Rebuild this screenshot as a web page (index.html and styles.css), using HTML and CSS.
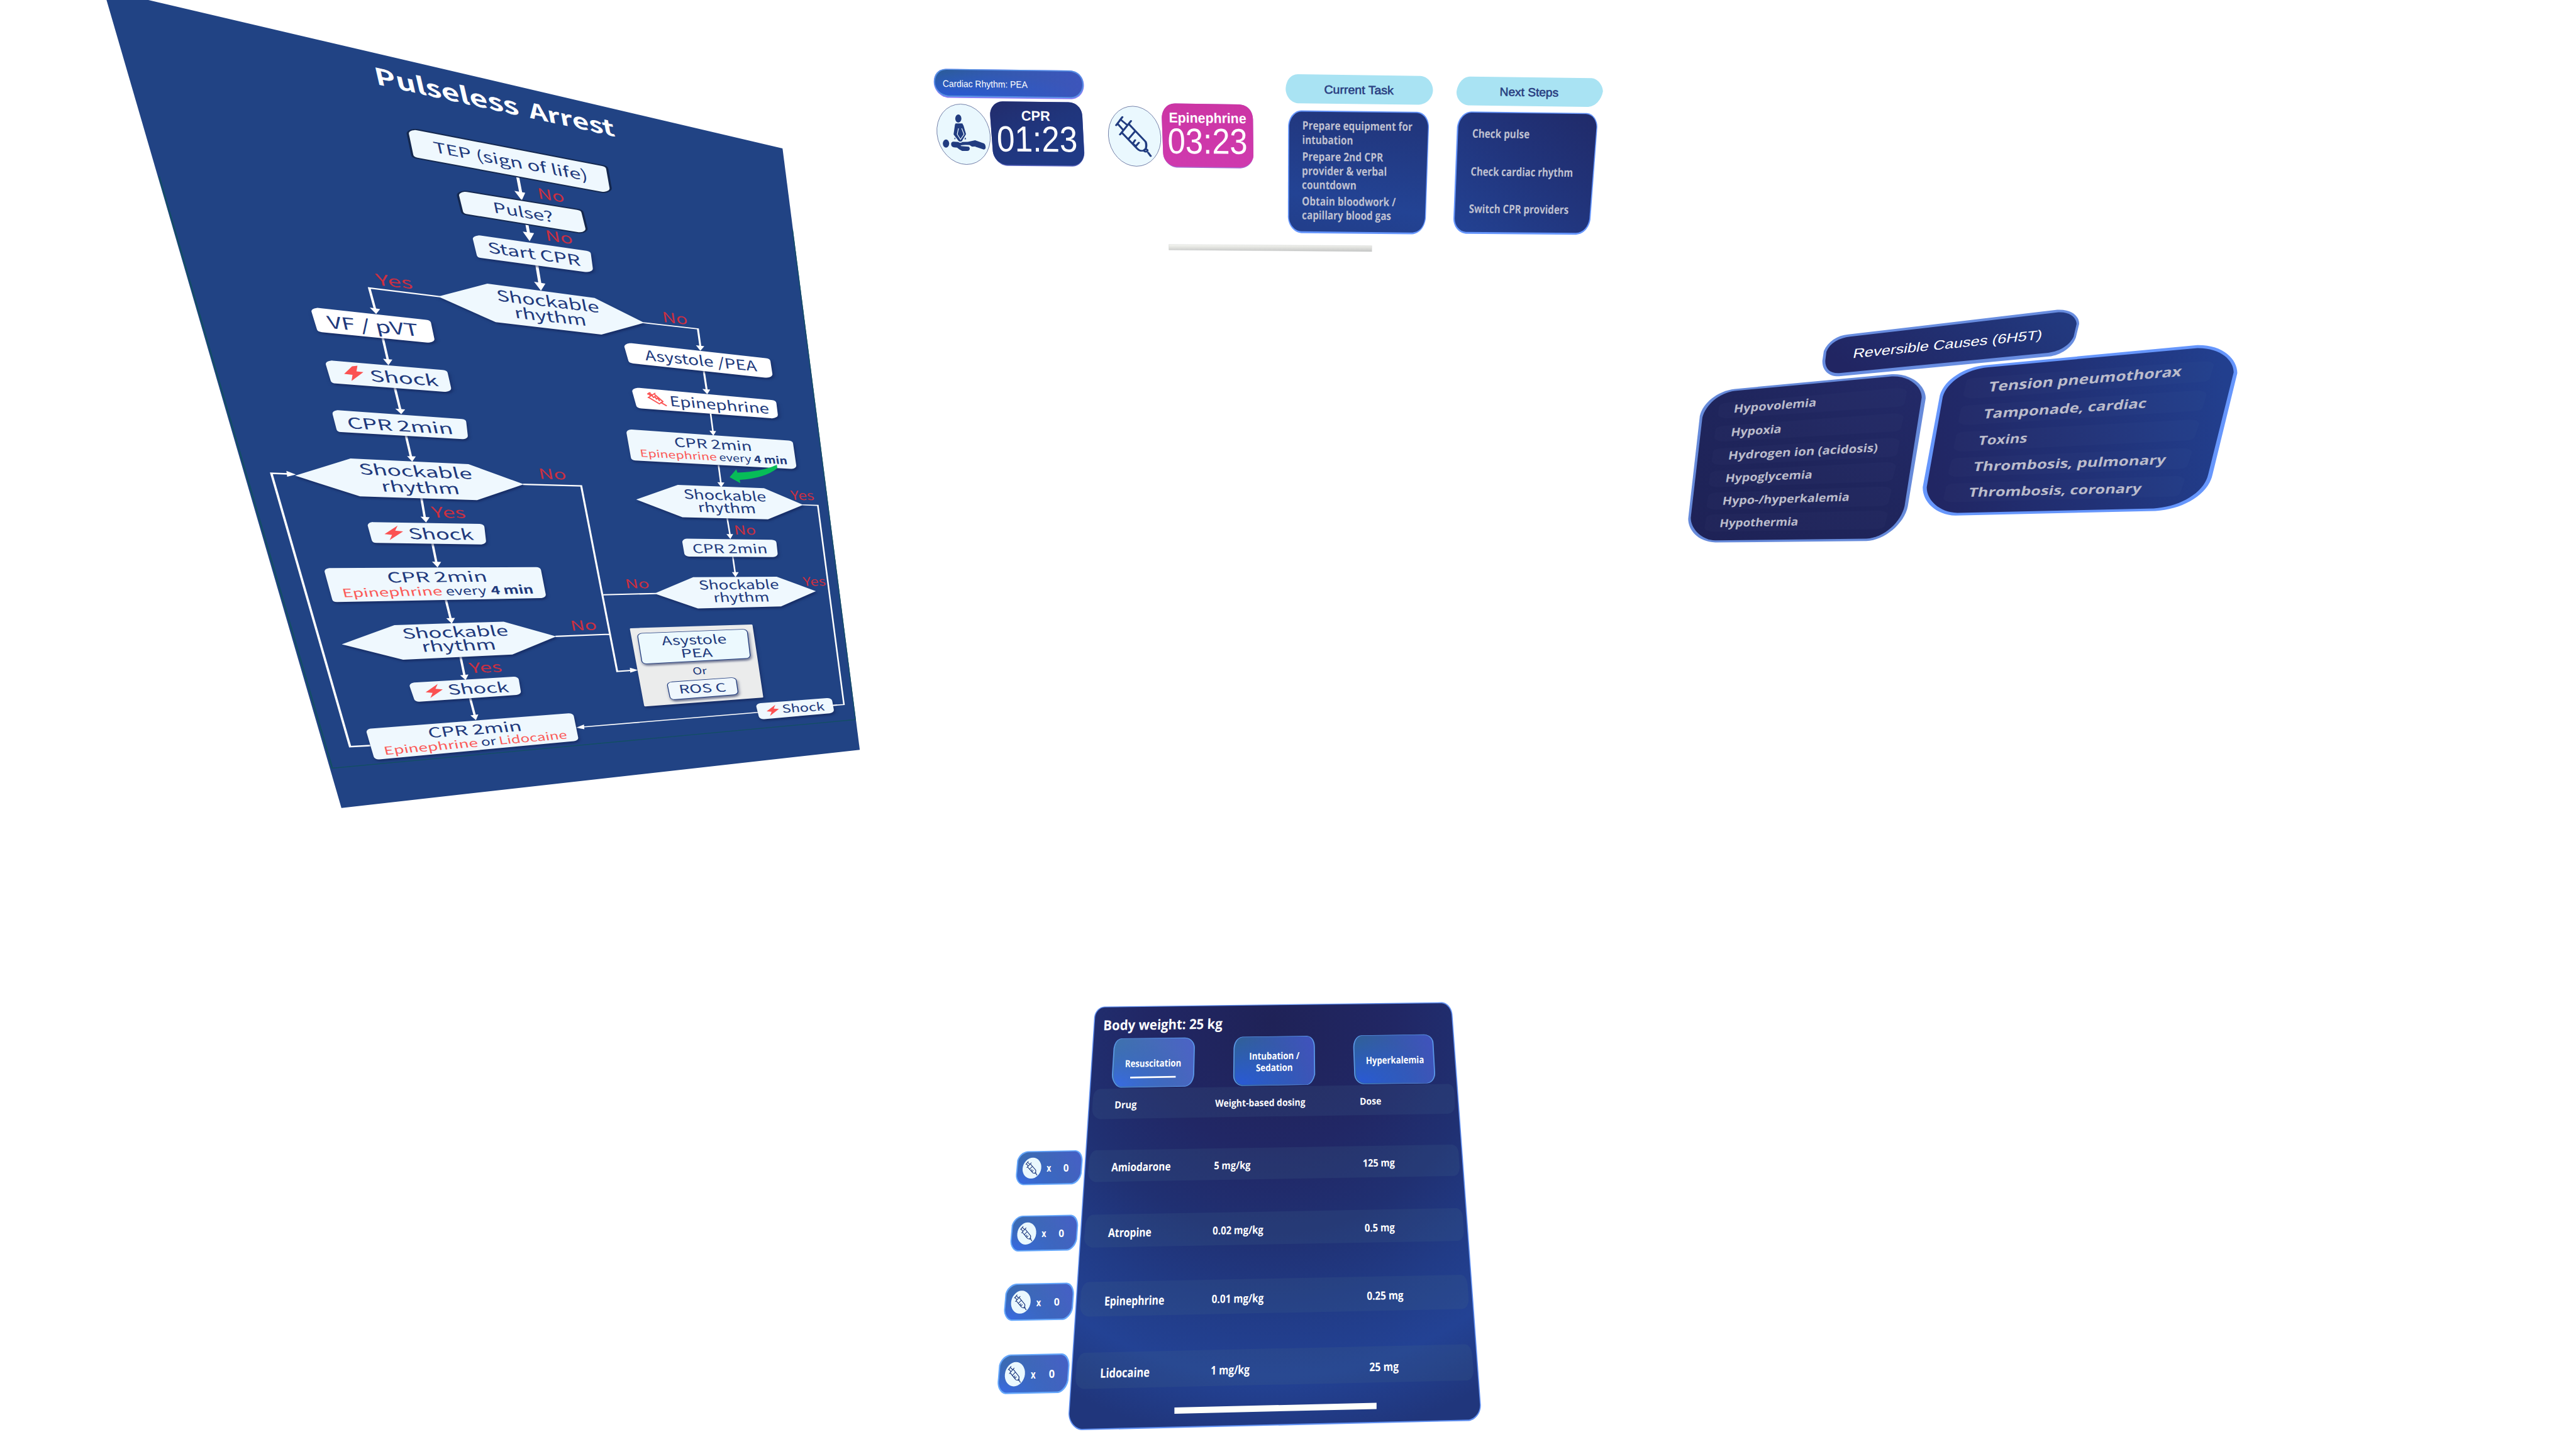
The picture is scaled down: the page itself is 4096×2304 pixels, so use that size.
FILE: index.html
```
<!DOCTYPE html>
<html lang="en">
<head>
<meta charset="utf-8">
<title>Resuscitation assistant</title>
<link rel="stylesheet" href="styles.css">
</head>
<body>
<svg class="defs" aria-hidden="true">
  <defs>
    <linearGradient id="g-rhythm" x1="0" y1="0" x2="1" y2="0"><stop offset="0" stop-color="#2b5c9a"/><stop offset=".35" stop-color="#325aae"/><stop offset="1" stop-color="#3d55bb"/></linearGradient>
    <radialGradient id="g-glow" cx="0.05" cy="1" r=".95"><stop offset="0" stop-color="#2a59d6"/><stop offset="1" stop-color="#2a59d6" stop-opacity="0"/></radialGradient>
    <linearGradient id="g-timer" x1="0" y1="0" x2=".6" y2="1"><stop offset="0" stop-color="#222c6c"/><stop offset=".5" stop-color="#20357c"/><stop offset="1" stop-color="#203a86"/></linearGradient>
    <linearGradient id="g-epi" x1="0" y1="0" x2="0" y2="1"><stop offset="0" stop-color="#cc35a4"/><stop offset="1" stop-color="#cf3aae"/></linearGradient>
    <linearGradient id="g-bar" x1="0" y1="0" x2="0" y2="1"><stop offset="0" stop-color="#f6f7f2"/><stop offset="1" stop-color="#c4c5c4"/></linearGradient>
    <linearGradient id="g-task" x1=".6" y1="0" x2=".4" y2="1"><stop offset="0" stop-color="#21357b"/><stop offset=".75" stop-color="#234394"/><stop offset="1" stop-color="#223f8c"/></linearGradient>
    <linearGradient id="g-next" x1="1" y1="0" x2="0" y2="1"><stop offset="0" stop-color="#202a69"/><stop offset=".5" stop-color="#21357d"/><stop offset="1" stop-color="#234293"/></linearGradient>
    <linearGradient id="g-cause" x1="0" y1=".6" x2="1" y2=".3"><stop offset="0" stop-color="#212562"/><stop offset="1" stop-color="#22397f"/></linearGradient>
    <linearGradient id="g-h" x1="0" y1="1" x2="1" y2="0"><stop offset="0" stop-color="#1e2256"/><stop offset=".5" stop-color="#1f255c"/><stop offset="1" stop-color="#232a69"/></linearGradient>
    <linearGradient id="g-t" x1="0" y1=".6" x2="1" y2=".5"><stop offset="0" stop-color="#212663"/><stop offset=".5" stop-color="#213176"/><stop offset="1" stop-color="#223f8e"/></linearGradient>
    <radialGradient id="g-dose" gradientUnits="userSpaceOnUse" cx="0" cy="0" r="2900" gradientTransform="translate(880 200) scale(.45 1)"><stop offset="0" stop-color="#1f2257"/><stop offset=".3" stop-color="#212765"/><stop offset=".5" stop-color="#203072"/><stop offset=".68" stop-color="#213b86"/><stop offset=".84" stop-color="#234294"/><stop offset="1" stop-color="#20367c"/></radialGradient>
    <linearGradient id="g-btn" x1="0" y1=".2" x2="1" y2="0"><stop offset="0" stop-color="#2f6196"/><stop offset=".5" stop-color="#3659ac"/><stop offset="1" stop-color="#4152be"/></linearGradient>
    <linearGradient id="g-btn-on" x1="0" y1=".2" x2="1" y2="0"><stop offset="0" stop-color="#3f76aa"/><stop offset="1" stop-color="#4e62c8"/></linearGradient>
    <linearGradient id="g-chip" x1="0" y1=".2" x2="1" y2="0"><stop offset="0" stop-color="#3a6fae"/><stop offset="1" stop-color="#475fc8"/></linearGradient>
    <radialGradient id="g-glow2" cx="0" cy="1" r="1.05"><stop offset="0" stop-color="#386ae6"/><stop offset="1" stop-color="#3862b4" stop-opacity="0.1"/></radialGradient>
    <clipPath id="board-clip"><polygon points="12,0 97,0 1386,555 1543,2804 489.4,3021.5"/></clipPath>
    <polygon id="bolt" points="34,0 1,32 20,35 14,55 48,22 28,19"/>
    <g id="syringe">
      <path d="M1233 147L1193 220M1222 170L1262 215M1203 208L1240 265M1289 182L1218 303M1275 210L1384 368Q1392 395 1385 430Q1378 450 1360 449Q1345 450 1330 430L1232 290M1315 275L1275 340M1316 353L1300 385M1340 376L1320 408L1304 388M1400 464L1417 496"/>
      <circle cx="1385" cy="446" r="11"/>
    </g>
    <g id="chip">
      <path class="chip-edge" d="M38 6L188 0C203 4 209 39 209 69L206 159C203 199 188 231 176 234L23 240C8 237 0 199 1 169L5 69C10 34 23 9 38 6Z"/>
      <path fill="url(#g-chip)" d="M40 14L186 8C199 12 205 42 205 72L202 157C199 192 186 222 174 225L24 231C12 228 4 197 5 167L9 72C13 42 26 17 40 14Z"/>
      <path fill="url(#g-glow2)" d="M40 14L186 8C199 12 205 42 205 72L202 157C199 192 186 222 174 225L24 231C12 228 4 197 5 167L9 72C13 42 26 17 40 14Z"/>
      <circle class="disc" r="100" transform="matrix(.29 0 -.035 .72 51 123)"/>
      <use href="#syringe" class="ink" transform="matrix(.1706 0 -.013 .268 -168.7 37.6)"/>
    </g>
  </defs>
</svg>
<main class="scene">

<section class="panel algorithm" aria-label="Pulseless arrest algorithm">
<svg class="art" viewBox="0 0 1568 1568" preserveAspectRatio="none">
  <polygon class="board" points="12,0 97,0 1386,555 1543,2804 489.4,3021.5"/>
  <g clip-path="url(#board-clip)">
    <path class="seam" d="M119 660L471 2873L1535 2691L1407 860"/>
  </g>

  <g class="wire">
    <path class="thick" d="M847 655L854 722M866 835L870 874M886 985L893 1062"/>
    <path class="mid" d="M690 1109.500L546 1077L558 1158M573 1260L584 1348M598 1450L609 1532"/>
    <path class="thin" d="M1103 1207L1214 1230L1219 1296M1226 1388L1232 1460"/>
  </g>
  <path class="head" d="M841 714L863 721L856 750ZM858 866L881 872L872 902ZM881 1054L904 1061L895 1087ZM547 1150L568 1156L560 1174ZM1210 1291L1227 1295L1219 1312ZM574 1342L593 1345L585 1366ZM599 1528L619 1531L611 1549ZM1223 1455L1239 1457L1233 1474Z"/>

  <polygon class="rim" points="639,499 1015,633 1022,705 648,578"/>
  <polygon class="rim" points="741,730 965,797 973,856 749,789"/>
  <g class="nodes">
    <polygon class="node" points="639,499 1015,633 1022,705 648,578"/>
    <polygon class="node" points="741,730 965,797 973,856 749,789"/>
  </g>
  <g class="nodes raised">
    <polygon class="node" points="769,893 984,950 988,1005 777,953"/>
    <polygon class="hex" points="686,1109 786,1061 1004,1114 1105,1207 1018,1251 803,1205"/>
    <polygon class="node plain" points="441,1164 659,1208 666,1269 452,1230"/>
    <polygon class="node" points="470,1361 693,1396 700,1453 480,1422"/>
    <polygon class="node plain" points="1077,1296 1349,1352 1353,1400 1085,1347"/>
    <polygon class="node plain" points="1093,1463 1361,1508 1364,1552 1101,1515"/>
  </g>
  <polygon class="bolt" points="522,1368 511,1370 495,1398 512,1402 510,1425 534,1392 520,1389"/>
  <g class="red-syringe" transform="matrix(.2696 0 0 .4181 1050 1404.900)">
    <path d="M230 164L247 153M232 160L250 178M240 154L258 170M234 196L284 158M240 196L318 252L345 232L284 170M330 240L370 268M262 178L275 196L284 186L296 210L306 200L318 224"/>
  </g>

  <g class="flow">
    <text class="title" font-size="88" textLength="292" transform="matrix(1 .405 .125 1 561 315)">Pulseless</text>
    <text class="title" font-size="81" textLength="174" transform="matrix(1 .405 .1 1 873 441)">Arrest</text>
    <text font-size="55" textLength="313" transform="matrix(1 .343 .12 1 679 570)">TEP (sign of life)</text>
    <text font-size="54" textLength="122" transform="matrix(1 .305 .11 1 800 795)">Pulse?</text>
    <text font-size="55" textLength="188" transform="matrix(1 .265 .108 1 789 945)">Start CPR</text>
    <text font-size="56" textLength="208" transform="matrix(1 .215 .105 1 807 1125)">Shockable</text>
    <text font-size="56" textLength="146" transform="matrix(1 .205 .103 1 843 1189)">rhythm</text>
    <text font-size="63" textLength="185" transform="matrix(1 .168 .127 1 464 1227)">VF / pVT</text>
    <text font-size="57" textLength="138" transform="matrix(1 .135 .125 1 550 1426)">Shock</text>
    <text font-size="52" textLength="227" transform="matrix(1 .185 .083 1 1108 1347)">Asystole /PEA</text>
    <text font-size="51" textLength="202" transform="matrix(1 .148 .083 1 1158 1518)">Epinephrine</text>
    <g class="answer">
      <text font-size="54" textLength="54" transform="matrix(1 .29 .1 1 890 742)">No</text>
      <text font-size="53" textLength="55" transform="matrix(1 .26 .1 1 906 899)">No</text>
      <text font-size="58" textLength="74" transform="matrix(1 .2 .12 1 562 1066)">Yes</text>
      <text font-size="52" textLength="51" transform="matrix(1 .19 .08 1 1143 1204)">No</text>
    </g>
  </g>

  <g transform="matrix(.8043 0 0 .9839 306.800 1505.300)">
    <g class="wire">
      <path class="thick" d="M390 125L403 208M429 362L438 440M457 535L467 608M491 750L503 822M528 966L538 1038M552 1122L564 1190M300 1304L249 1308L50 269L92 271.500"/>
      <path class="mid" d="M686 311L833 317L924 1022L960 1018.500M889 731L1022 726M768 889L904 881"/>
      <path class="thin" d="M1160 42L1166 110M1180 238L1186 306M1202 440L1209 502M1216 585L1222 648M1392 389L1431 391L1497 1148L1462 1152M1280 1178L836 1233.500"/>
    </g>
    <path class="head" d="M393 204L415 205L406 225ZM427 434L450 436L441 456ZM456 605L479 606L470 627ZM492 820L514 819L506 840ZM527 1037L548 1034L541 1055ZM553 1189L573 1186L567 1207ZM88 260L90 282L112 274ZM956 1008L957 1027L977 1017ZM1157 107L1174 109L1167 126ZM1177 303L1195 304L1187 322ZM1200 500L1217 500L1210 519ZM1214 645L1231 645L1223 664ZM840 1224L841 1242L820 1236Z"/>
    <g class="nodes raised">
      <polygon class="node" points="217,42 530,75 534,127 227,100"/>
      <polygon class="hex" points="110,278 250,213 548,234 688,311 570,371 274,357"/>
      <polygon class="node" points="306,467 576,474 580,527 316,521"/>
      <polygon class="node" points="197,642 719,638 731,731 216,746"/>
      <polygon class="hex" points="228,919 361,846 637,833 770,889 659,958 383,978"/>
      <polygon class="node" points="412,1077 663,1055 668,1099 423,1125"/>
      <polygon class="node" points="303,1252 802,1194 813,1275 321,1344"/>
      <polygon class="node" points="960,115 1356,157 1364,240 971,208"/>
      <polygon class="hex" points="972,369 1077,313 1295,326 1394,389 1305,444 1089,436"/>
      <polygon class="node" points="1101,530 1314,534 1317,575 1106,573"/>
      <polygon class="hex" points="1018,726 1116,664 1327,662 1426,717 1338,775 1128,783"/>
      <polygon class="outcome" points="959,861 1263,847 1290,1119 995,1152"/>
      <polygon class="node" points="1288,1155 1455,1136 1459,1169 1294,1191"/>
    </g>
    <path class="thin-over" d="M1462 1152L1480 1150"/>
    <g class="raised">
      <polygon class="oval-rim" points="988,889 1241,874 1248,961 998,981"/>
      <polygon class="oval-rim" points="1063,1074 1213,1058 1217,1099 1069,1117"/>
    </g>
    <polygon class="oval" points="988,889 1241,874 1248,961 998,981"/>
    <polygon class="oval pale" points="1063,1074 1213,1058 1217,1099 1069,1117"/>
    <use href="#bolt" class="bolt" transform="translate(335 468)"/>
    <use href="#bolt" class="bolt" transform="matrix(.92 -.03 0 .95 439 1071)"/>
    <use href="#bolt" class="bolt" transform="matrix(.66 -.03 0 .75 1301 1150)"/>
    <path class="pointer" transform="matrix(.3351 0 0 .4249 923.900 -102)" d="M848 908L898 838L907 867Q1090 860 1204 797L1208 828Q1110 920 924 932L929 962Z"/>
    <g class="flow">
      <text font-size="57" textLength="267" transform="matrix(1 .085 .16 1 245 98)">CPR 2min</text>
      <text font-size="56" textLength="285" transform="matrix(1 .065 .165 1 275 273)">Shockable</text>
      <text font-size="56" textLength="197" transform="matrix(1 .055 .163 1 331 338)">rhythm</text>
      <text font-size="56" textLength="163" transform="matrix(1 .02 .165 1 400 519)">Shock</text>
      <text font-size="53" textLength="252" transform="matrix(1 -.012 .17 1 346 684)">CPR 2min</text>
      <text class="drug" font-size="43" textLength="252" transform="matrix(1 -.03 .17 1 232 740)">Epinephrine</text>
      <text font-size="43" textLength="103" transform="matrix(1 -.03 .165 1 493 733)">every</text>
      <text class="strong" font-size="43" textLength="107" transform="matrix(1 -.03 .16 1 607 729)">4 min</text>
      <text font-size="53" textLength="267" transform="matrix(1 -.045 .165 1 384 898)">Shockable</text>
      <text font-size="54" textLength="187" transform="matrix(1 -.05 .165 1 433 948)">rhythm</text>
      <text font-size="52" textLength="153" transform="matrix(1 -.07 .162 1 499 1111)">Shock</text>
      <text font-size="51" textLength="236" transform="matrix(1 -.115 .16 1 449 1275)">CPR 2min</text>
      <text class="drug" font-size="41" textLength="237" transform="matrix(1 -.13 .165 1 337 1339)">Epinephrine</text>
      <text font-size="41" textLength="38" transform="matrix(1 -.13 .16 1 582 1306)">or</text>
      <text class="drug" font-size="40" textLength="172" transform="matrix(1 -.13 .15 1 627 1300)">Lidocaine</text>
      <text font-size="48" textLength="196" transform="matrix(1 .085 .11 1 1070 168)">CPR 2min</text>
      <text class="drug" font-size="38" textLength="194" transform="matrix(1 .077 .11 1 983 206)">Epinephrine</text>
      <text font-size="38" textLength="81" transform="matrix(1 .075 .1 1 1183 222)">every</text>
      <text class="strong" font-size="38" textLength="84" transform="matrix(1 .072 .1 1 1271 229)">4 min</text>
      <text font-size="49" textLength="208" transform="matrix(1 .05 .11 1 1094 366)">Shockable</text>
      <text font-size="49" textLength="146" transform="matrix(1 .04 .11 1 1130 416)">rhythm</text>
      <text font-size="46" textLength="189" transform="matrix(1 .006 .105 1 1116 572)">CPR 2min</text>
      <text font-size="47" textLength="202" transform="matrix(1 -.012 .105 1 1132 711)">Shockable</text>
      <text font-size="47" textLength="141" transform="matrix(1 -.02 .105 1 1169 759)">rhythm</text>
      <text font-size="46" textLength="164" transform="matrix(1 -.045 .12 1 1038 923)">Asystole</text>
      <text font-size="44" textLength="79" transform="matrix(1 -.05 .12 1 1087 970)">PEA</text>
      <text font-size="36" textLength="36" transform="matrix(1 -.05 .12 1 1116 1034)">Or</text>
      <text font-size="44" textLength="119" transform="matrix(1 -.06 .12 1 1082 1106)">ROS C</text>
      <text font-size="42" textLength="107" transform="matrix(1 -.09 .1 1 1342 1180)">Shock</text>
      <g class="answer">
        <text font-size="56" textLength="85" transform="matrix(1 .03 .15 1 458 437)">Yes</text>
        <text font-size="53" textLength="69" transform="matrix(1 .04 .13 1 728 290)">No</text>
        <text font-size="51" textLength="66" transform="matrix(1 -.05 .13 1 808 867)">No</text>
        <text font-size="52" textLength="82" transform="matrix(1 -.05 .15 1 553 1028)">Yes</text>
        <text font-size="48" textLength="59" transform="matrix(1 .02 .1 1 1364 370)">Yes</text>
        <text font-size="47" textLength="55" transform="matrix(1 0 .1 1 1221 501)">No</text>
        <text font-size="46" textLength="61" transform="matrix(1 -.01 .12 1 946 706)">No</text>
        <text font-size="45" textLength="57" transform="matrix(1 -.02 .1 1 1395 697)">Yes</text>
      </g>
    </g>
  </g>
</svg>
</section>

<section class="panel timers" aria-label="Timers">
<svg class="art" viewBox="0 0 1568 1568" preserveAspectRatio="none">
  <path fill="#8f7cf6" d="M90 66L645 78C690 80 711 140 711 195C711 250 690 300 655 302L105 292C65 288 36 230 36 165C36 110 55 68 90 66Z"/>
  <path fill="#5590e4" d="M90 66L645 78C690 80 709 140 709 190C709 240 690 292 655 294L103 283C65 280 37 220 37 165C37 110 55 68 90 66Z"/>
  <path fill="url(#g-rhythm)" d="M92 73L640 87C685 88 704 140 704 190C704 235 685 284 655 286L103 272C68 268 42 220 42 168C42 115 60 74 92 73Z"/>
  <path fill="url(#g-glow)" d="M92 73L640 87C685 88 704 140 704 190C704 235 685 284 655 286L103 272C68 268 42 220 42 168C42 115 60 74 92 73Z"/>
  <path fill="#5b66c0" d="M345 320L640 326C680 328 704 380 704 440L713 720C713 780 690 826 660 827L368 822C330 818 303 760 301 700L290 440C286 380 305 322 345 320Z"/>
  <path fill="url(#g-timer)" d="M345 320L640 326C680 328 704 380 704 440L712 720C712 775 690 818 660 820L368 815C330 811 303 760 301 700L290 440C286 380 305 322 345 320Z"/>
  <path fill="#a56bd0" d="M1120 336L1405 343C1450 345 1470 400 1471 460L1473 745C1470 800 1445 840 1415 841L1128 835C1095 830 1068 780 1067 720L1061 450C1062 390 1080 338 1120 336Z"/>
  <path fill="url(#g-epi)" d="M1120 336L1405 343C1450 345 1470 400 1471 460L1473 745C1470 795 1445 833 1415 834L1128 828C1095 824 1068 780 1067 720L1061 450C1062 390 1080 338 1120 336Z"/>
  <g transform="matrix(.6923 0 0 .871 30.150 313.600)">
    <circle class="disc ring" r="100" transform="matrix(1.724 .03 .19 2.700 202 301)"/>
    <circle class="disc ring" r="100" transform="matrix(1.700 .03 .12 2.685 1312.500 318.500)"/>
    <g class="figure">
      <ellipse cx="168" cy="160" rx="20" ry="36"/>
      <ellipse cx="88" cy="384" rx="20.500" ry="36"/>
      <path d="M150 204L194 204L202 225L218 300L190 364L178 367L170 362L137 302L146 215ZM146 327L150 345L141 345ZM214 327L219 346L207 346Z"/>
      <path d="M121 388Q122 366 138 367L168 370Q180 384 194 370L230 369L277 355L334 383Q347 395 345 425Q342 440 330 436L278 412L257 412L240 398L195 400L185 406L236 412Q246 424 240 440Q237 451 225 450L193 450L174 436L160 421L138 418Q121 412 121 388Z"/>
      <path class="cut" d="M169 248L161 301L182 347L205 301L190 248M184 403Q192 397 240 400L255 417L278 411"/>
    </g>
    <use href="#syringe" class="ink"/>
  </g>
  <g class="arial">
    <text font-size="74" textLength="382" transform="matrix(1 .022 .015 1 76 206)">Cardiac Rhythm: PEA</text>
    <text class="strong" font-size="108" textLength="130" transform="matrix(1 .022 .015 1 430 468)">CPR</text>
    <text font-size="281" textLength="362" transform="matrix(1 .013 .015 1 321 708)">01:23</text>
    <text class="strong" font-size="109" textLength="348" transform="matrix(1 .021 .01 1 1093 483)">Epinephrine</text>
    <text font-size="279" textLength="359" transform="matrix(1 .013 .005 1 1088 724)">03:23</text>
  </g>
  <polygon class="grab" points="1093,1434 2005,1444 2005,1490 1093,1477"/>
</svg>
</section>

<section class="panel tasks" aria-label="Tasks">
<svg class="art" viewBox="0 0 1568 1568" preserveAspectRatio="none">
  <path class="tab" d="M135 108L685 121C720 124 742 180 742 235C740 290 715 342 678 345L135 334C105 330 80 280 80 220C82 160 100 110 135 108Z"/>
  <path class="tab" d="M908 126L1455 138C1485 142 1506 200 1506 243C1500 300 1475 358 1440 362L900 350C870 345 847 300 848 245C852 185 875 128 908 126Z"/>
  <path class="edge" d="M150 390L670 401C705 404 724 460 724 520L710 1230C706 1290 685 1350 648 1355L150 1346C115 1340 91 1280 90 1220L91 510C93 450 115 392 150 390Z"/>
  <path fill="url(#g-task)" d="M150 399L668 409C700 412 720 465 720 520L706 1228C702 1285 685 1338 650 1341L150 1332C118 1328 96 1275 95 1220L96 510C98 455 120 400 150 399Z"/>
  <path class="edge" d="M915 398L1435 410C1465 415 1482 470 1481 520L1450 1240C1445 1300 1420 1355 1385 1358L890 1351C855 1345 833 1290 834 1230L850 520C855 455 880 400 915 398Z"/>
  <path fill="url(#g-next)" d="M915 407L1430 418C1462 423 1477 470 1477 520L1445 1235C1440 1295 1418 1342 1385 1344L890 1337C860 1332 839 1285 840 1230L856 520C860 460 885 408 915 407Z"/>
  <g class="arial tab-label">
    <text font-size="91" textLength="312" transform="matrix(1 .022 0 1 253 258)">Current Task</text>
    <text font-size="91" textLength="264" transform="matrix(1 .022 -.01 1 1042 276)">Next Steps</text>
  </g>
  <g class="segoe muted">
    <text font-size="91" textLength="495" transform="matrix(1 .02 0 1 155 539)">Prepare equipment for</text>
    <text font-size="91" textLength="229" transform="matrix(1 .02 0 1 154 651)">intubation</text>
    <text font-size="91" textLength="364" transform="matrix(1 .02 0 1 154 781)">Prepare 2nd CPR</text>
    <text font-size="91" textLength="382" transform="matrix(1 .02 0 1 153 892)">provider &amp; verbal</text>
    <text font-size="91" textLength="245" transform="matrix(1 .02 0 1 153 1001)">countdown</text>
    <text font-size="91" textLength="422" transform="matrix(1 .018 -.005 1 153 1129)">Obtain bloodwork /</text>
    <text font-size="91" textLength="401" transform="matrix(1 .017 -.005 1 153 1237)">capillary blood gas</text>
    <text font-size="91" textLength="258" transform="matrix(1 .02 -.02 1 918 602)">Check pulse</text>
    <text font-size="91" textLength="460" transform="matrix(1 .019 -.02 1 911 898)">Check cardiac rhythm</text>
    <text font-size="91" textLength="448" transform="matrix(1 .018 -.02 1 903 1188)">Switch CPR providers</text>
  </g>
</svg>
</section>

<section class="panel causes" aria-label="Reversible causes">
<svg class="art" viewBox="0 0 1568 1568" preserveAspectRatio="none">
  <path fill="#688de0" d="M470 206L1045 50C1090 45 1106 100 1105 140L1096 225C1085 290 1055 335 1022 345L445 470C415 472 398 430 399 370L403 310C415 250 440 212 470 206Z"/>
  <path fill="url(#g-cause)" d="M475 220L1048 66C1085 62 1098 110 1098 140L1090 220C1080 270 1055 312 1020 322L445 450C420 453 406 420 407 370L410 315C420 260 445 228 475 220Z"/>
  <path fill="#668ada" d="M158 550L590 457C650 452 684 540 683 610L634 1290C625 1400 570 1505 520 1511L105 1520C55 1515 30 1440 30 1370L62 720C70 640 110 562 158 550Z"/>
  <path fill="url(#g-h)" d="M158 562L590 471C640 466 673 540 672 605L625 1290C615 1390 570 1488 520 1496L105 1507C65 1505 37 1430 37 1365L69 730C78 650 115 575 158 562Z"/>
  <path class="edge" d="M850 399L1430 273C1500 270 1540 360 1540 450L1472 1090C1460 1220 1390 1310 1315 1321L765 1350C710 1345 674 1260 675 1170L722 590C735 490 790 410 850 399Z"/>
  <path fill="url(#g-t)" d="M855 413L1430 292C1495 290 1530 370 1530 445L1460 1090C1448 1210 1380 1295 1310 1305L770 1333C720 1330 685 1250 686 1170L730 600C742 505 795 425 855 413Z"/>
  <g class="bands">
    <polygon points="140,662 606,570 600,638 137,710"/>
    <polygon points="130,808 597,730 590,795 127,857"/>
    <polygon points="123,950 586,885 580,955 120,1005"/>
    <polygon points="115,1092 576,1038 568,1110 112,1145"/>
    <polygon points="110,1230 564,1192 556,1265 106,1287"/>
    <polygon points="104,1368 553,1344 546,1410 100,1427"/>
    <polygon points="820,505 1450,400 1440,480 812,585"/>
    <polygon points="805,678 1430,585 1420,665 798,752"/>
    <polygon points="792,845 1410,770 1398,850 785,920"/>
    <polygon points="778,1010 1390,950 1378,1030 770,1080"/>
    <polygon points="764,1172 1370,1125 1358,1205 757,1240"/>
  </g>
  <g class="arial">
    <text font-size="84" textLength="520" transform="matrix(1 -.232 -.095 1 481 356)">Reversible Causes (6H5T)</text>
  </g>
  <g class="segoe muted dim">
    <text font-size="72" textLength="227" transform="matrix(1 -.18 -.07 1 154 701)">Hypovolemia</text>
    <text font-size="72" textLength="139" transform="matrix(1 -.155 -.07 1 146 849)">Hypoxia</text>
    <text font-size="72" textLength="411" transform="matrix(1 -.122 -.07 1 139 996)">Hydrogen ion (acidosis)</text>
    <text font-size="71" textLength="239" transform="matrix(1 -.098 -.07 1 131 1139)">Hypoglycemia</text>
    <text font-size="71" textLength="349" transform="matrix(1 -.072 -.07 1 123 1282)">Hypo-/hyperkalemia</text>
    <text font-size="70" textLength="216" transform="matrix(1 -.05 -.07 1 115 1423)">Hypothermia</text>
    <text font-size="87" textLength="530" transform="matrix(1 -.187 -.1 1 854 568)">Tension pneumothorax</text>
    <text font-size="83" textLength="448" transform="matrix(1 -.155 -.1 1 840 738)">Tamponade, cardiac</text>
    <text font-size="80" textLength="134" transform="matrix(1 -.125 -.1 1 826 905)">Toxins</text>
    <text font-size="81" textLength="529" transform="matrix(1 -.085 -.1 1 812 1070)">Thrombosis, pulmonary</text>
    <text font-size="79" textLength="475" transform="matrix(1 -.056 -.1 1 799 1232)">Thrombosis, coronary</text>
  </g>
</svg>
</section>

<section class="panel dosing" aria-label="Weight-based dosing">
<svg class="art" viewBox="0 0 1568 1568" preserveAspectRatio="none">
  <path fill="#6090f2" d="M358 93L1410 63C1430 66 1444 110 1444 160L1532 2830C1533 2890 1515 2935 1495 2942L288 3005C265 3000 247 2950 247 2890L327 165C330 120 345 95 358 93Z"/>
  <path fill="url(#g-dose)" d="M360 98L1410 70C1428 73 1441 115 1441 160L1529 2830C1530 2885 1513 2926 1495 2933L288 2996C268 2992 250 2945 250 2890L330 165C333 125 345 100 360 98Z"/>
  <g class="rows">
    <path d="M345 659L1430 625Q1449 632 1450 690L1451 780Q1449 824 1430 830L345 867Q321 855 321 800L323 720Q327 664 345 659Z"/>
    <path d="M333 1081L1443 1042Q1462 1050 1463 1110L1466 1200Q1464 1250 1450 1257L330 1299Q308 1285 308 1230L311 1150Q316 1088 333 1081Z"/>
    <path d="M322 1524L1455 1479Q1474 1485 1476 1545L1479 1640Q1478 1697 1460 1704L320 1750Q296 1735 296 1680L300 1590Q305 1530 322 1524Z"/>
    <path d="M310 1987L1470 1937Q1488 1945 1491 2010L1494 2105Q1493 2165 1475 2172L308 2225Q283 2210 283 2150L286 2055Q292 1993 310 1987Z"/>
    <path d="M297 2473L1483 2415Q1502 2423 1505 2490L1509 2595Q1508 2655 1490 2663L293 2722Q269 2707 269 2650L273 2540Q280 2478 297 2473Z"/>
  </g>
  <g class="tab-button">
    <path fill="url(#g-btn-on)" d="M415 313L610 308C630 310 639 345 639 375L637 560C635 605 625 635 610 641L410 649C395 645 383 600 384 560L389 380C392 340 400 315 415 313Z"/>
    <path fill="url(#g-btn)" d="M790 302L990 296C1005 300 1013 330 1013 370L1014 560C1010 600 1000 628 990 630L788 637C770 630 762 600 762 570L763 380C765 335 775 305 790 302Z"/>
    <path fill="url(#g-btn)" d="M1160 292L1355 286C1375 290 1383 320 1383 350L1388 550C1388 590 1378 615 1365 619L1168 625C1150 622 1139 590 1139 555L1136 375C1136 330 1145 295 1160 292Z"/>
  </g>
  <path fill="url(#g-glow2)" d="M415 317L610 312C628 314 636 345 636 375L634 560C632 602 624 630 610 635L410 643C397 639 387 600 388 560L393 380C396 343 402 319 415 317Z"/>
  <path fill="url(#g-glow)" d="M790 306L990 300C1003 304 1010 330 1010 370L1011 560C1007 598 998 622 990 624L788 631C773 624 766 600 766 570L767 380C768 338 777 309 790 306Z"/>
  <path fill="url(#g-glow)" d="M1160 296L1355 290C1372 294 1380 320 1380 350L1385 550C1385 588 1376 609 1365 613L1168 619C1153 616 1143 588 1143 555L1139 375C1139 334 1148 299 1160 296Z"/>
  <polygon fill="#fff" points="439,575 581,570 581,582 439,587"/>
  <polygon class="handle" points="577,2849 1207,2817 1207,2860 577,2892"/>
  <g class="segoe">
    <text font-size="95" textLength="371" transform="matrix(1 -.03 -.02 1 355 256)">Body weight: 25 kg</text>
    <text font-size="67" textLength="175" transform="matrix(1 -.03 -.01 1 423 509)">Resuscitation</text>
    <text font-size="67" textLength="157" transform="matrix(1 -.03 0 1 810 458)">Intubation /</text>
    <text font-size="67" textLength="115" transform="matrix(1 -.03 0 1 831 538)">Sedation</text>
    <text font-size="67" textLength="181" transform="matrix(1 -.03 .01 1 1174 487)">Hyperkalemia</text>
    <text font-size="68" textLength="69" transform="matrix(1 -.03 -.02 1 390 793)">Drug</text>
    <text font-size="67" textLength="281" transform="matrix(1 -.03 0 1 704 782)">Weight-based dosing</text>
    <text font-size="67" textLength="67" transform="matrix(1 -.03 .01 1 1155 768)">Dose</text>
    <text font-size="79" textLength="185" transform="matrix(1 -.035 -.02 1 380 1226)">Amiodarone</text>
    <text font-size="72" textLength="114" transform="matrix(1 -.035 -.01 1 700 1212)">5 mg/kg</text>
    <text font-size="71" textLength="100" transform="matrix(1 -.035 .01 1 1164 1194)">125 mg</text>
    <text font-size="82" textLength="135" transform="matrix(1 -.038 -.02 1 370 1678)">Atropine</text>
    <text font-size="75" textLength="158" transform="matrix(1 -.038 -.01 1 696 1660)">0.02 mg/kg</text>
    <text font-size="74" textLength="94" transform="matrix(1 -.038 .01 1 1170 1641)">0.5 mg</text>
    <text font-size="86" textLength="187" transform="matrix(1 -.042 -.02 1 358 2149)">Epinephrine</text>
    <text font-size="79" textLength="162" transform="matrix(1 -.042 -.01 1 693 2132)">0.01 mg/kg</text>
    <text font-size="78" textLength="114" transform="matrix(1 -.042 .01 1 1177 2110)">0.25 mg</text>
    <text font-size="89" textLength="154" transform="matrix(1 -.045 -.02 1 345 2645)">Lidocaine</text>
    <text font-size="82" textLength="121" transform="matrix(1 -.045 -.01 1 690 2623)">1 mg/kg</text>
    <text font-size="81" textLength="91" transform="matrix(1 -.045 .01 1 1185 2600)">25 mg</text>
  </g>
  <g class="segoe">
    <g transform="translate(82 1081)"><use href="#chip"/><text font-size="66" textLength="14" transform="translate(97 147)">x</text><text font-size="66" textLength="17" transform="translate(149 145)">0</text></g>
    <g transform="matrix(1.014 0 0 1.054 65 1523.800)"><use href="#chip"/><text font-size="66" textLength="14" transform="translate(97 147)">x</text><text font-size="66" textLength="17" transform="translate(149 145)">0</text></g>
    <g transform="matrix(1.048 0 0 1.096 45 1990.800)"><use href="#chip"/><text font-size="66" textLength="14" transform="translate(97 147)">x</text><text font-size="66" textLength="17" transform="translate(149 145)">0</text></g>
    <g transform="matrix(1.077 0 0 1.163 25 2477.800)"><use href="#chip"/><text font-size="66" textLength="14" transform="translate(97 147)">x</text><text font-size="66" textLength="17" transform="translate(149 145)">0</text></g>
  </g>
</svg>
</section>

</main>
<script src="fit.js"></script>
</body>
</html>
```
FILE: styles.css
```
html, body {
  margin: 0;
  background: #fff;
}

.defs {
  position: absolute;
  width: 0;
  height: 0;
}

.scene {
  position: relative;
  width: 4096px;
  height: 2304px;
  overflow: hidden;
}

/* Floating windows of the headset view */
.panel { position: absolute; }
.algorithm { left: 160px; top: 0; width: 1226.67px; height: 666.67px; }
.timers { left: 1472px; top: 96px; width: 554.67px; height: 320px; }
.tasks { left: 2016px; top: 96px; width: 554.67px; height: 320px; }
.causes { left: 2666.67px; top: 480px; width: 906.67px; height: 394.67px; }
.dosing { left: 1573.33px; top: 1578.67px; width: 800px; height: 362.67px; }

.art {
  display: block;
  width: 100%;
  height: 100%;
  overflow: visible;
}

/* Flow chart */
.board { fill: #214384; }
.seam { fill: none; stroke: #124f63; stroke-width: 3; }
.wire path { fill: none; stroke: #fff; }
.wire .thick { stroke-width: 6; }
.wire .mid { stroke-width: 5; }
.wire .thin { stroke-width: 4; }
.thin-over { fill: none; stroke: #fff; stroke-width: 4; }
.head { fill: #fff; }
.node { fill: #eff8fe; stroke: #eff8fe; stroke-width: 25; stroke-linejoin: round; }
.node.plain { fill: #fff; stroke: #fff; }
.rim { fill: #14284f; stroke: #14284f; stroke-width: 34; stroke-linejoin: round; }
.hex { fill: #eff8fe; }
.raised { filter: drop-shadow(3px 7px 4px rgba(14, 28, 78, .55)); }
.outcome { fill: #ebecec; stroke: #ebecec; stroke-width: 6; stroke-linejoin: round; }
.oval-rim { fill: #1f3a7d; stroke: #1f3a7d; stroke-width: 26; stroke-linejoin: round; }
.oval { fill: #ecf9fe; stroke: #ecf9fe; stroke-width: 22; stroke-linejoin: round; }
.oval.pale { fill: #eff7fd; stroke: #eff7fd; }
.bolt { fill: #fb5252; }
.pointer { fill: #07bd58; }
.red-syringe path { fill: none; stroke: #fb5252; stroke-width: 10; stroke-linecap: round; stroke-linejoin: round; }

.flow {
  font-family: "Noto Sans CJK SC", "Noto Sans", sans-serif;
  fill: #20397c;
}
.flow .title { font-weight: 700; fill: #fff; }
.flow .strong { font-weight: 700; }
.flow .drug { fill: #fb5a58; }
.flow .answer { fill: #cb2f42; }

/* Timers, tasks, causes */
.arial { font-family: "Liberation Sans", Arial, sans-serif; fill: #fff; }
.arial .strong { font-weight: 700; }
.tab-label { fill: #2a3f82; stroke: #2a3f82; stroke-width: 3; }
.segoe { font-family: "Open Sans", "Noto Sans", sans-serif; font-weight: 700; fill: #fff; }
.segoe.muted { fill: #bfc0d0; }
.segoe.dim { fill: #bbbccb; }
.disc { fill: #eaf8fe; }
.ring { stroke: #2d3c78; stroke-width: 1.4; }
.ink { fill: none; stroke: #213c80; stroke-width: 14; stroke-linecap: round; stroke-linejoin: round; }
.figure { fill: #213c80; }
.figure .cut { fill: none; stroke: #eaf8fe; stroke-width: 5; }
.grab { fill: url(#g-bar); stroke: #b4b6b6; stroke-width: 1; }
.tab { fill: #a9e3f3; }
.edge { fill: #6696fc; }
.bands { opacity: .025; }
.bands polygon { fill: #8fb4d0; stroke: #8fb4d0; stroke-width: 50; stroke-linejoin: round; }

/* Dosing table */
.rows { fill: #42668a; opacity: .2; }
.tab-button path { stroke: #5a97e8; stroke-width: 3.5; }
.chip-edge { fill: #64a6fb; }
.handle { fill: #fefffb; }
```
FILE: fit.js
```
document.querySelectorAll('text[textLength]').forEach(function (label) {
  label.setAttribute('lengthAdjust', 'spacingAndGlyphs');
});
```
